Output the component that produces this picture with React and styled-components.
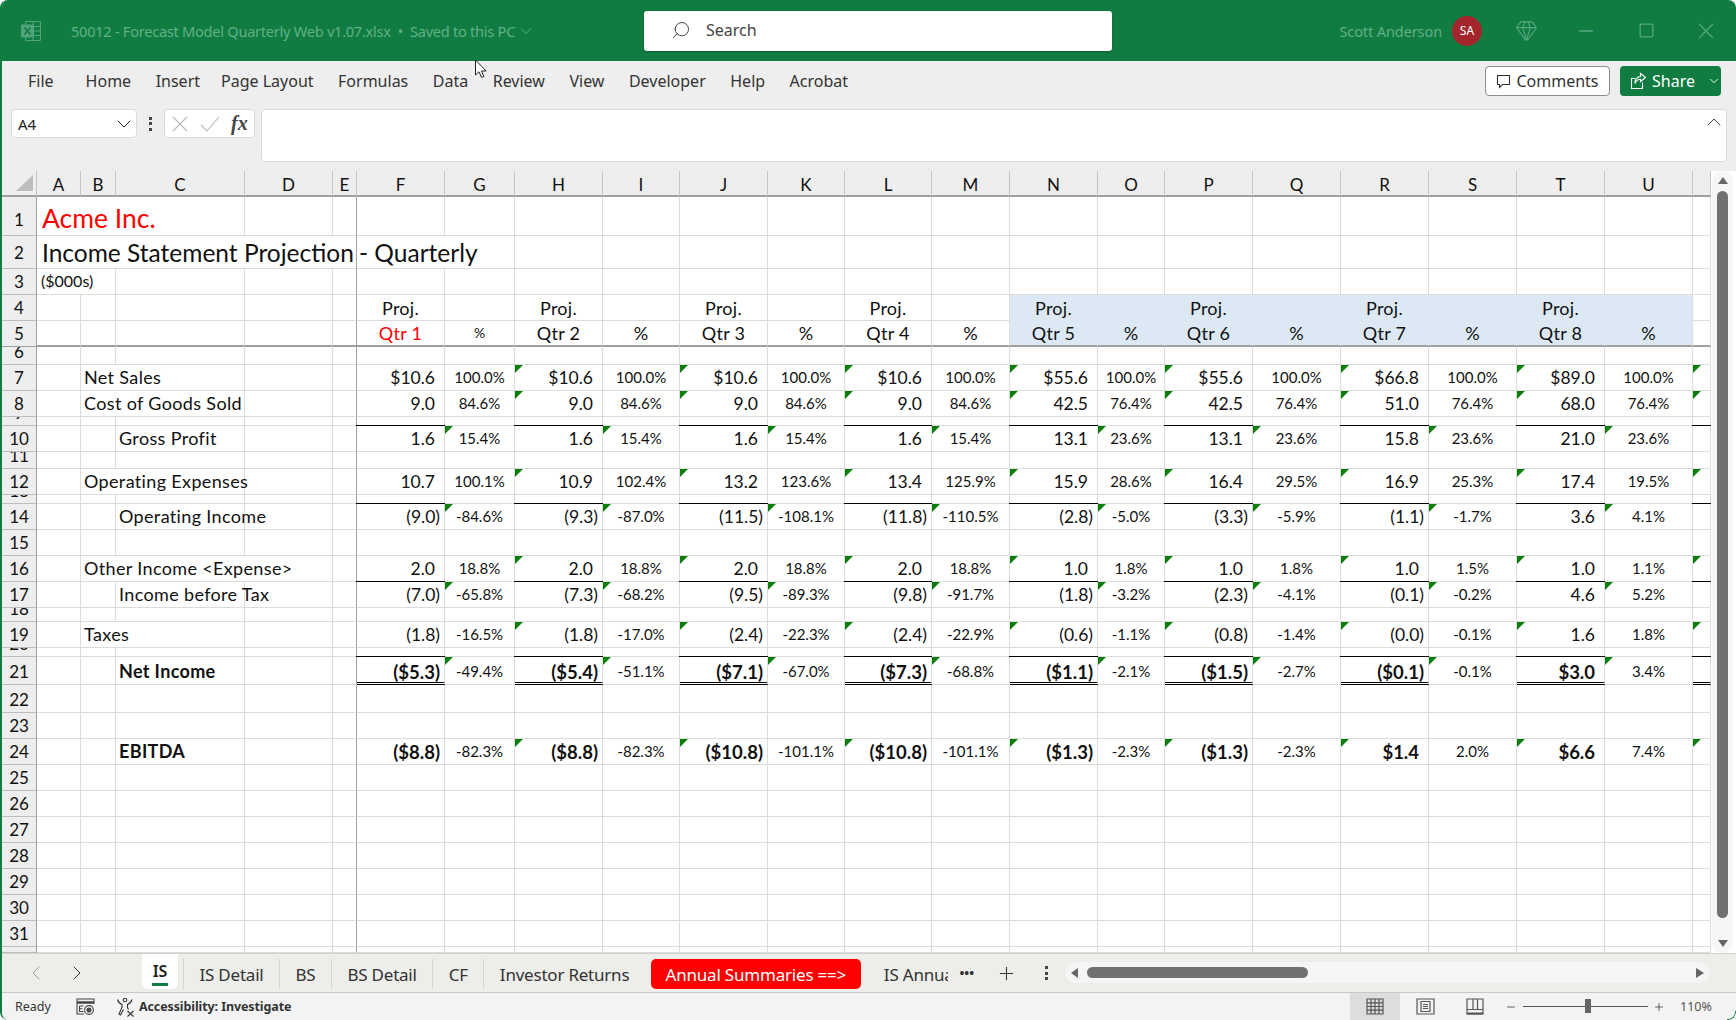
import React from 'react';
import styled, { createGlobalStyle } from 'styled-components';
import { Search, ChevronDown, ChevronUp, ChevronLeft, ChevronRight, Gem, Minus, Square, X, Plus } from 'lucide-react';

const GlobalStyle = createGlobalStyle`
  html, body { margin: 0; padding: 0; background: #fff; overflow: hidden; }
  * { box-sizing: border-box; }
`;

const uiFont = `'Noto Sans', 'Open Sans', sans-serif`;
const cellFont = `Lato, Carlito, sans-serif`;
const green = '#107c41';
const gridLine = '#dcdcdc';
const freezeLine = '#a0a0a0';
const titleIcon = '#55a981';

const colEdges = [2, 37, 81, 116, 245, 333, 357, 445, 515, 603, 680, 768, 845, 932, 1010, 1098, 1165, 1253, 1341, 1429, 1517, 1605, 1693, 1711];
const rowEdges = [171, 197, 236, 269, 295, 321, 347, 365, 391, 417, 426, 452, 469, 495, 504, 530, 556, 582, 608, 622, 648, 657, 685, 713, 739, 765, 791, 817, 843, 869, 895, 921, 947, 953];
const diffs = (edges) => edges.slice(1).map((e, i) => `${e - edges[i]}px`).join(' ');

const colNames = ['A', 'B', 'C', 'D', 'E', 'F', 'G', 'H', 'I', 'J', 'K', 'L', 'M', 'N', 'O', 'P', 'Q', 'R', 'S', 'T', 'U', ''];

const labels = {
  7: { text: 'Net Sales', col: 1, span: 2 },
  8: { text: 'Cost of Goods Sold', col: 1, span: 2 },
  10: { text: 'Gross Profit', col: 2, span: 1 },
  12: { text: 'Operating Expenses', col: 1, span: 2 },
  14: { text: 'Operating Income', col: 2, span: 1 },
  16: { text: 'Other Income <Expense>', col: 1, span: 3 },
  17: { text: 'Income before Tax', col: 2, span: 1 },
  19: { text: 'Taxes', col: 1, span: 2 },
  21: { text: 'Net Income', col: 2, span: 1, bold: true },
  24: { text: 'EBITDA', col: 2, span: 1, bold: true },
};

const figures = {
  7: [['$10.6', '100.0%'], ['$10.6', '100.0%'], ['$10.6', '100.0%'], ['$10.6', '100.0%'], ['$55.6', '100.0%'], ['$55.6', '100.0%'], ['$66.8', '100.0%'], ['$89.0', '100.0%']],
  8: [['9.0', '84.6%'], ['9.0', '84.6%'], ['9.0', '84.6%'], ['9.0', '84.6%'], ['42.5', '76.4%'], ['42.5', '76.4%'], ['51.0', '76.4%'], ['68.0', '76.4%']],
  10: [['1.6', '15.4%'], ['1.6', '15.4%'], ['1.6', '15.4%'], ['1.6', '15.4%'], ['13.1', '23.6%'], ['13.1', '23.6%'], ['15.8', '23.6%'], ['21.0', '23.6%']],
  12: [['10.7', '100.1%'], ['10.9', '102.4%'], ['13.2', '123.6%'], ['13.4', '125.9%'], ['15.9', '28.6%'], ['16.4', '29.5%'], ['16.9', '25.3%'], ['17.4', '19.5%']],
  14: [['(9.0)', '-84.6%'], ['(9.3)', '-87.0%'], ['(11.5)', '-108.1%'], ['(11.8)', '-110.5%'], ['(2.8)', '-5.0%'], ['(3.3)', '-5.9%'], ['(1.1)', '-1.7%'], ['3.6', '4.1%']],
  16: [['2.0', '18.8%'], ['2.0', '18.8%'], ['2.0', '18.8%'], ['2.0', '18.8%'], ['1.0', '1.8%'], ['1.0', '1.8%'], ['1.0', '1.5%'], ['1.0', '1.1%']],
  17: [['(7.0)', '-65.8%'], ['(7.3)', '-68.2%'], ['(9.5)', '-89.3%'], ['(9.8)', '-91.7%'], ['(1.8)', '-3.2%'], ['(2.3)', '-4.1%'], ['(0.1)', '-0.2%'], ['4.6', '5.2%']],
  19: [['(1.8)', '-16.5%'], ['(1.8)', '-17.0%'], ['(2.4)', '-22.3%'], ['(2.4)', '-22.9%'], ['(0.6)', '-1.1%'], ['(0.8)', '-1.4%'], ['(0.0)', '-0.1%'], ['1.6', '1.8%']],
  21: [['($5.3)', '-49.4%'], ['($5.4)', '-51.1%'], ['($7.1)', '-67.0%'], ['($7.3)', '-68.8%'], ['($1.1)', '-2.1%'], ['($1.5)', '-2.7%'], ['($0.1)', '-0.1%'], ['$3.0', '3.4%']],
  24: [['($8.8)', '-82.3%'], ['($8.8)', '-82.3%'], ['($10.8)', '-101.1%'], ['($10.8)', '-101.1%'], ['($1.3)', '-2.3%'], ['($1.3)', '-2.3%'], ['$1.4', '2.0%'], ['$6.6', '7.4%']],
};

// rows whose number sits under a black rule and whose marker sits on the % column
const ruledRows = [10, 14, 17, 21];
const boldRows = [21, 24];

const Window = styled.div`
  width: 1736px;
  height: 1020px;
  display: flex;
  flex-direction: column;
  background: #eeeeee;
  border-left: 2px solid ${green};
  border-radius: 8px;
  overflow: hidden;
  font-family: ${uiFont};
  position: relative;
`;

const TitleBar = styled.header`
  height: 61px;
  margin-left: -2px;
  flex: none;
  background: ${green};
  display: grid;
  grid-template-columns: 644px 468px 1fr;
  align-items: center;
`;

const TitleLeft = styled.div`
  display: flex;
  align-items: center;
  padding-left: 21px;
  color: #62b088;
  font-size: 14.6px;
  white-space: nowrap;
`;

const FileName = styled.span`
  margin-left: 30px;
  margin-right: 1px;
  letter-spacing: -0.27px;
`;

const SearchBox = styled.div`
  height: 40px;
  background: #fff;
  border-radius: 3px;
  box-shadow: 0 1px 2px rgba(0, 0, 0, 0.3);
  display: flex;
  align-items: center;
  padding: 0 0 2px 27px;
  gap: 15px;
  color: #444;
  font-size: 16px;
`;

const TitleRight = styled.div`
  display: flex;
  align-items: center;
  justify-content: flex-end;
  color: #62b088;
  font-size: 14.5px;
  letter-spacing: -0.1px;
`;

const Avatar = styled.span`
  width: 30px;
  height: 30px;
  margin-left: 10px;
  margin-right: 33px;
  border-radius: 50%;
  background: #a4262c;
  color: #fff;
  font-size: 12px;
  letter-spacing: 0;
  display: flex;
  align-items: center;
  justify-content: center;
`;

const WindowButton = styled.span`
  width: 60px;
  display: flex;
  justify-content: center;
  margin-left: ${({ $left }) => $left || 0}px;
`;

const RibbonTabs = styled.nav`
  height: 40px;
  flex: none;
  display: flex;
  align-items: center;
  padding-left: 26px;
  font-size: 16px;
  color: #333;
`;

const RibbonTab = styled.span`
  margin-right: ${({ $gap }) => $gap || 24.5}px;
`;

const RibbonActions = styled.div`
  margin-left: auto;
  padding-right: 15px;
  display: flex;
  gap: 10px;
`;

const CommentsButton = styled.button`
  width: 125px;
  height: 30px;
  padding: 0;
  background: #fff;
  border: 1px solid #8c8c8c;
  border-radius: 4px;
  display: flex;
  align-items: center;
  justify-content: center;
  gap: 5px;
  font: inherit;
  color: #333;
`;

const ShareButton = styled.button`
  width: 101px;
  height: 30px;
  padding: 0 0 0 10px;
  background: ${green};
  border: none;
  border-radius: 4px;
  display: flex;
  align-items: center;
  gap: 5px;
  font: inherit;
  color: #fff;
`;

const FormulaRow = styled.div`
  height: 62px;
  flex: none;
  margin-top: 8px;
  padding: 0 9px 9px 9px;
  display: flex;
  align-items: flex-start;
`;

const NameBox = styled.div`
  width: 126px;
  height: 29px;
  background: #fff;
  border: 1px solid #dadada;
  border-radius: 4px;
  display: flex;
  align-items: center;
  justify-content: space-between;
  padding: 0 0 0 6px;
  font-size: 15px;
  color: #222;
`;

const Dots = styled.span`
  width: 27px;
  height: 29px;
  display: flex;
  flex-direction: column;
  align-items: center;
  justify-content: center;
  gap: 2.5px;
`;

const Dot = styled.i`
  width: 3px;
  height: 3px;
  background: #444;
`;

const FxBox = styled.div`
  width: 91px;
  height: 29px;
  background: #fff;
  border: 1px solid #dadada;
  border-radius: 4px;
  display: flex;
  align-items: center;
  padding-left: 7px;
  gap: 12px;
`;

const FxMark = styled.span`
  margin-left: -1px;
  font-family: 'Liberation Serif', serif;
  font-style: italic;
  font-weight: 700;
  font-size: 20px;
  color: #444;
`;

const FormulaInput = styled.div`
  flex: 1;
  height: 53px;
  margin-left: 6px;
  background: #fff;
  border: 1px solid #dadada;
  border-radius: 4px;
  display: flex;
  justify-content: flex-end;
  padding: 0;
  color: #444;
`;

const SheetArea = styled.div`
  height: 782px;
  flex: none;
  display: flex;
  background: #fff;
`;

const Sheet = styled.div`
  display: grid;
  grid-template-columns: ${diffs(colEdges)};
  grid-template-rows: ${diffs(rowEdges)};
  font-family: ${cellFont};
  color: #111;
`;

const Corner = styled.div`
  background: #eeeeee;
  border-bottom: 2px solid ${freezeLine};
  border-right: 1px solid #c4c4c4;
  padding: 4px 3px 4px 14px;
`;

const CornerMark = styled.div`
  width: 100%;
  height: 100%;
  background: #bdbdbd;
  clip-path: polygon(100% 0, 100% 100%, 0 100%);
`;

const ColHeader = styled.div`
  background: #eeeeee;
  border-bottom: 2px solid ${freezeLine};
  border-right: 1px solid #c4c4c4;
  display: flex;
  align-items: center;
  justify-content: center;
  padding-top: 2px;
  font-size: 17px;
  overflow: hidden;
`;

const RowHeader = styled.div`
  background: #eeeeee;
  border-right: 1px solid ${freezeLine};
  border-bottom: 1px solid ${({ $strong }) => ($strong ? freezeLine : '#bdbdbd')};
  display: flex;
  align-items: flex-end;
  justify-content: center;
  padding-bottom: ${({ $bottom }) => $bottom}px;
  overflow: hidden;
  font-size: 17px;
  line-height: 16px;
`;

const Cell = styled.div`
  position: relative;
  display: flex;
  align-items: flex-end;
  justify-content: ${({ $align }) => $align};
  grid-column: span ${({ $span }) => $span || 1};
  padding: 0 ${({ $pad }) => $pad}px ${({ $bottom }) => $bottom}px ${({ $indent }) => $indent}px;
  white-space: nowrap;
  background: ${({ $fill }) => $fill || 'transparent'};
  border-right: 1px solid ${({ $noRight, $freeze }) => ($freeze ? freezeLine : $noRight ? 'transparent' : gridLine)};
  border-bottom: ${({ $double, $strong, $noBottom }) =>
    $double ? '3px double #000' : $strong ? `2px solid ${freezeLine}` : $noBottom ? 'none' : `1px solid ${gridLine}`};
  color: ${({ $color }) => $color || 'inherit'};
  font-size: ${({ $size }) => $size}px;
  font-weight: ${({ $bold }) => ($bold ? 700 : 400)};
  letter-spacing: ${({ $track }) => $track || 0}px;
  line-height: 18px;
  ${({ $rule }) => $rule && `
    &::before {
      content: '';
      position: absolute;
      left: -1px;
      right: -1px;
      top: -1px;
      height: 1px;
      background: #000;
    }
  `}
  ${({ $flag }) => $flag && `
    &::after {
      content: '';
      position: absolute;
      left: 0;
      top: 0;
      width: 8px;
      height: 8px;
      background: #0a7d0a;
      clip-path: polygon(0 0, 100% 0, 0 100%);
    }
  `}
`;

const VScroll = styled.div`
  flex: 1;
  margin: 0 3px 0 1px;
  align-self: stretch;
  background: #f6f6f6;
  border-radius: 10px;
  display: flex;
  flex-direction: column;
  align-items: center;
  padding: 6px 0;
`;

const VThumb = styled.div`
  width: 11px;
  flex: 1;
  margin: 7px 0 22px;
  background: #717171;
  border-radius: 6px;
`;

const TabBar = styled.div`
  height: 40px;
  flex: none;
  background: #edede9;
  border-top: 1px solid #d0d0d0;
  border-bottom: 1px solid #c8c8c8;
  display: flex;
  align-items: flex-start;
  font-size: 17px;
  color: #333;
`;

const TabArrows = styled.div`
  width: 140px;
  height: 100%;
  display: flex;
  align-items: center;
  padding-left: 22px;
  gap: 17px;
`;

const ActiveTab = styled.div`
  width: 36px;
  height: 35px;
  background: #fff;
  border-radius: 0 0 6px 6px;
  display: flex;
  flex-direction: column;
  align-items: center;
  justify-content: flex-end;
  padding-bottom: 3px;
  font-weight: 600;
  font-size: 16px;
  line-height: 24px;
  color: #222;
`;

const ActiveBar = styled.span`
  width: 16px;
  height: 3px;
  background: ${green};
`;

const SheetTab = styled.div`
  height: 30px;
  margin-top: 5px;
  margin-left: ${({ $left }) => $left || 0}px;
  padding: 0 15.5px;
  display: flex;
  align-items: center;
  border-left: 1px solid #d4d4d4;
  letter-spacing: -0.22px;
  white-space: nowrap;
`;

const RedTab = styled.div`
  width: 210px;
  height: 30px;
  margin: 5px 0 0 6px;
  background: #ff0000;
  border-radius: 5px;
  color: #fff;
  display: flex;
  align-items: center;
  justify-content: center;
  letter-spacing: -0.2px;
  white-space: nowrap;
`;

const ClippedTab = styled.div`
  width: 64px;
  height: 30px;
  margin: 5px 0 0 23px;
  display: flex;
  align-items: center;
  overflow: hidden;
  white-space: nowrap;
  letter-spacing: -0.2px;
`;

const TabTools = styled.div`
  height: 100%;
  display: flex;
  align-items: center;
  color: #333;
  font-size: 13px;
  font-weight: 700;
`;

const TabTool = styled.span`
  width: ${({ $w }) => $w}px;
  display: flex;
  justify-content: center;
`;

const HScroll = styled.div`
  width: 645px;
  height: 21px;
  margin: 8px 0 0 -1px;
  background: #f5f5f5;
  border-radius: 10px;
  display: flex;
  align-items: center;
  padding: 0 6px;
`;

const HThumb = styled.div`
  width: 221px;
  height: 11px;
  margin-left: 9px;
  background: #717171;
  border-radius: 6px;
`;

const Arrow = styled.span`
  width: 0;
  height: 0;
  border-style: solid;
  border-color: transparent;
  ${({ $dir }) => ($dir === 'left'
    ? `border-width: 5px 7px 5px 0; border-right-color: #666;`
    : `border-width: 5px 0 5px 8px; border-left-color: #666; margin-left: auto;`)}
`;

const VArrow = styled.span`
  width: 0;
  height: 0;
  border-style: solid;
  border-color: transparent;
  ${({ $dir }) => ($dir === 'up'
    ? `border-width: 0 5px 7px 5px; border-bottom-color: #666;`
    : `border-width: 7px 5px 0 5px; border-top-color: #666;`)}
`;

const StatusBar = styled.footer`
  flex: 1;
  background: #f3f3f3;
  display: flex;
  align-items: center;
  padding-left: 13px;
  font-size: 12.5px;
  color: #333;
  position: relative;

  &::after {
    content: '';
    position: absolute;
    right: 0;
    bottom: 0;
    width: 8px;
    height: 8px;
    border-right: 1px solid ${green};
    border-bottom: 1px solid ${green};
    border-bottom-right-radius: 8px;
  }
`;

const StatusIcon = styled.span`
  display: flex;
  margin-left: ${({ $left }) => $left}px;
  margin-right: ${({ $right }) => $right || 0}px;
`;

const Strong = styled.span`
  font-weight: 700;
  margin-left: 3px;
  letter-spacing: -0.1px;
`;

const StatusRight = styled.div`
  margin-left: auto;
  height: 100%;
  display: flex;
  align-items: center;
`;

const ViewButton = styled.span`
  width: 50px;
  height: 100%;
  display: flex;
  align-items: center;
  justify-content: center;
  background: ${({ $active }) => ($active ? '#dddddd' : 'transparent')};
`;

const ZoomControl = styled.div`
  display: flex;
  align-items: center;
  width: 236px;
  padding-left: 5px;
`;

const ZoomTrack = styled.div`
  position: relative;
  width: 125px;
  height: 1px;
  margin: 0 5px 0 6px;
  background: #555;
`;

const ZoomThumb = styled.span`
  position: absolute;
  left: 62px;
  top: -7px;
  width: 6px;
  height: 14px;
  background: #666;
`;

const ZoomLabel = styled.span`
  margin-left: 15px;
  color: #555;
`;

const Pointer = styled.svg`
  position: absolute;
  left: 472px;
  top: 59px;
`;

const ExcelLogo = () => (
  <svg width="20" height="20" viewBox="0 0 20 20" fill="none" stroke="#4fa47b" strokeWidth="1.1">
    <rect x="4.5" y="0.5" width="15" height="19" rx="1" />
    <path d="M12 0.5v19M4.5 5.5h15M4.5 10h15M4.5 14.5h15" />
    <rect x="0" y="3.5" width="13" height="13" fill="#4fa47b" stroke="none" />
    <path d="M3.5 6.5l6 7M9.5 6.5l-6 7" stroke="#107c41" strokeWidth="1.6" />
  </svg>
);

const CommentIcon = () => (
  <svg width="15" height="15" viewBox="0 0 15 15" fill="none" stroke="#333" strokeWidth="1.1">
    <path d="M1.5 1.5h12v9H6.5l-3 3v-3h-2z" />
  </svg>
);

const ShareIcon = () => (
  <svg width="17" height="18" viewBox="0 0 17 18" fill="none" stroke="#fff" strokeWidth="1.1">
    <path d="M5 6.5H1.5v10h11v-6" />
    <path d="M10.5 1.5l5 4-5 4V7.2C8 7.2 6 8.6 5 11.5 4.8 7.5 7 5 10.5 4.5z" />
  </svg>
);

const CancelMark = () => (
  <svg width="16" height="16" viewBox="0 0 16 16" stroke="#b8b8b8" strokeWidth="1.1">
    <path d="M1 1l14 14M15 1L1 15" />
  </svg>
);

const ConfirmMark = () => (
  <svg width="20" height="16" viewBox="0 0 20 16" fill="none" stroke="#b8b8b8" strokeWidth="1.1">
    <path d="M1 9l6 6L19 1" />
  </svg>
);

const MacroIcon = () => (
  <svg width="19" height="18" viewBox="0 0 19 18" fill="none" stroke="#444" strokeWidth="1.1">
    <path d="M1 4.5V1h17v5" />
    <path d="M1 4.5h17" strokeWidth="2.4" />
    <path d="M1 4.5V16h7" />
    <path d="M3.5 8h4M3.5 8v5.5h4M3.5 10.7h3" />
    <circle cx="13" cy="12" r="4.4" />
    <circle cx="13" cy="12" r="2" fill="#444" />
  </svg>
);

const AccessIcon = () => (
  <svg width="20" height="20" viewBox="0 0 20 20" fill="none" stroke="#333" strokeWidth="1.1">
    <circle cx="9" cy="3" r="1.8" />
    <path d="M1.5 2.5c1 3 3 4.5 4.5 5v3l-3 6.5 1.5 1 3-5.5" />
    <path d="M16 2.5c-1 3-3 4.5-4.5 5v3l1 2" />
    <path d="M11.5 14l6 5.5M17.5 14l-6 5.5" />
  </svg>
);

const NormalViewIcon = () => (
  <svg width="18" height="17" viewBox="0 0 18 17" fill="none" stroke="#555" strokeWidth="1.2">
    <path d="M1 1h16v15H1zM5 1v15M9 1v15M13 1v15M1 4.8h16M1 8.5h16M1 12.2h16" />
  </svg>
);

const PageViewIcon = () => (
  <svg width="19" height="17" viewBox="0 0 19 17" fill="none" stroke="#555" strokeWidth="1.2">
    <path d="M1 1h17v15H1zM5 3.5h9v10H5zM7 6.5h5M7 8.5h5M7 10.5h5" />
  </svg>
);

const BreakViewIcon = () => (
  <svg width="18" height="17" viewBox="0 0 18 17" fill="none" stroke="#555" strokeWidth="1.2">
    <path d="M1 1h16v15H1zM1 11.5h16M7 1v10.5M11.5 1v10.5" />
    <path d="M1 15.5h16" strokeWidth="2" />
  </svg>
);

const rowNumbers = Array.from({ length: 32 }, (_, i) => i + 1);

const cellsForRow = (row, frozenBottom) => {
  const out = [];
  const label = labels[row];
  const rowData = figures[row];
  const isRuled = ruledRows.includes(row);
  let skip = 0;

  colNames.forEach((name, c) => {
    if (skip > 0) {
      skip -= 1;
      return;
    }
    const key = `${row}-${c}`;
    const base = {
      $align: 'flex-start',
      $pad: 0,
      $indent: 3,
      $bottom: 3,
      $size: 16,
      $strong: frozenBottom,
      $freeze: c === 4,
    };

    // titles in the first rows run over the empty cells beside them
    if (row === 1 && c === 0) {
      out.push(<Cell key={key} {...base} $span={3} $size={26.5} $bottom={8} $color="#ff0000" $indent={5}>Acme Inc.</Cell>);
      skip = 2;
      return;
    }
    if (row === 2 && c === 0) {
      out.push(<Cell key={key} {...base} $span={5} $size={24.5} $bottom={6} $indent={5} $freeze>Income Statement Projection</Cell>);
      skip = 4;
      return;
    }
    if (row === 2 && c === 5) {
      out.push(<Cell key={key} {...base} $span={2} $size={24.5} $bottom={6} $indent={2}>- Quarterly</Cell>);
      skip = 1;
      return;
    }
    if (row === 3 && c === 0) {
      out.push(<Cell key={key} {...base} $span={2} $size={16} $bottom={4} $indent={4}>($000s)</Cell>);
      skip = 1;
      return;
    }
    if (label && c === label.col) {
      out.push(<Cell key={key} {...base} $span={label.span} $size={18} $bottom={4} $track={0.35} $bold={label.bold}>{label.text}</Cell>);
      skip = label.span - 1;
      return;
    }

    const inData = c >= 5 && c <= 20;
    const valueCol = c >= 5 && (c - 5) % 2 === 0; // F, H, J ... and the cut-off column after U
    const percentCol = c >= 6 && (c - 6) % 2 === 0;
    const fill = (row === 4 || row === 5) && c >= 13 && c <= 20 ? '#dce9f5' : undefined;

    if (row === 4 || row === 5) {
      const q = (c - 5) / 2 + 1;
      let text = '';
      if (valueCol && inData) text = row === 4 ? 'Proj.' : `Qtr ${q}`;
      if (percentCol && inData && row === 5) text = '%';
      const small = text === '%' && c === 6;
      const bare = !!fill && row === 4;
      out.push(
        <Cell
          key={key}
          {...base}
          $fill={fill}
          $noBottom={bare}
          $noRight={!!fill && c !== 20}
          $align="center"
          $indent={0}
          $bottom={bare ? 4 : 3}
          $size={small ? 14 : 18}
          $track={small ? 0 : 0.3}
          $color={row === 5 && c === 5 ? '#ff0000' : undefined}
        >
          {text}
        </Cell>,
      );
      return;
    }

    if (rowData && c >= 5) {
      const ruleHere = isRuled && valueCol;
      const flag = isRuled ? percentCol : valueCol && c > 5;
      const bold = boldRows.includes(row);
      const double = row === 21 && valueCol;
      const props = { ...base, $rule: ruleHere, $flag: flag, $double: double };
      if (inData) {
        const pair = rowData[Math.floor((c - 5) / 2)];
        if (valueCol) {
          const val = pair[0];
          out.push(
            <Cell
              key={key}
              {...props}
              $align="flex-end"
              $pad={val.endsWith(')') ? 4 : 9}
              $bottom={double ? 1 : 3}
              $size={bold ? 18.5 : 17.5}
              $bold={bold}
            >
              {val}
            </Cell>,
          );
        } else {
          out.push(
            <Cell key={key} {...props} $align="center" $indent={0} $bottom={4} $size={15}>
              {pair[1]}
            </Cell>,
          );
        }
      } else {
        out.push(<Cell key={key} {...props} />);
      }
      return;
    }

    out.push(<Cell key={key} {...base} />);
  });
  return out;
};

const App = () => (
  <Window>
    <GlobalStyle />
    <TitleBar>
      <TitleLeft>
        <ExcelLogo />
        <FileName>50012 - Forecast Model Quarterly Web v1.07.xlsx&nbsp;&nbsp;•&nbsp;&nbsp;Saved to this PC</FileName>
        <ChevronDown size={20} strokeWidth={1.1} />
      </TitleLeft>
      <SearchBox>
        <Search size={20} strokeWidth={1.2} style={{ transform: 'scaleX(-1)' }} />
        Search
      </SearchBox>
      <TitleRight>
        Scott Anderson
        <Avatar>SA</Avatar>
        <Gem size={23} strokeWidth={1.2} color={titleIcon} />
        <WindowButton $left={18}><Minus size={22} strokeWidth={1.4} color={titleIcon} /></WindowButton>
        <WindowButton><Square size={17} strokeWidth={1.8} color={titleIcon} /></WindowButton>
        <WindowButton><X size={26} strokeWidth={1.2} color={titleIcon} /></WindowButton>
      </TitleRight>
    </TitleBar>

    <RibbonTabs>
      <RibbonTab $gap={32}>File</RibbonTab>
      <RibbonTab>Home</RibbonTab>
      <RibbonTab $gap={21}>Insert</RibbonTab>
      {['Page Layout', 'Formulas', 'Data', 'Review', 'View', 'Developer', 'Help', 'Acrobat'].map((t) => (
        <RibbonTab key={t}>{t}</RibbonTab>
      ))}
      <RibbonActions>
        <CommentsButton><CommentIcon />Comments</CommentsButton>
        <ShareButton><ShareIcon />Share<ChevronDown size={14} strokeWidth={1.6} style={{ marginLeft: 7 }} /></ShareButton>
      </RibbonActions>
    </RibbonTabs>

    <FormulaRow>
      <NameBox>A4<ChevronDown size={24} strokeWidth={1} /></NameBox>
      <Dots><Dot /><Dot /><Dot /></Dots>
      <FxBox>
        <CancelMark />
        <ConfirmMark />
        <FxMark>fx</FxMark>
      </FxBox>
      <FormulaInput><ChevronUp size={24} strokeWidth={1} /></FormulaInput>
    </FormulaRow>

    <SheetArea>
      <Sheet>
        <Corner><CornerMark /></Corner>
        {colNames.map((name, i) => <ColHeader key={i}>{name}</ColHeader>)}
        {rowNumbers.map((row) => {
          const frozenBottom = row === 5;
          return (
            <React.Fragment key={row}>
              <RowHeader $strong={frozenBottom} $bottom={row <= 2 ? 7 : 4}>{row <= 31 ? row : ''}</RowHeader>
              {cellsForRow(row, frozenBottom)}
            </React.Fragment>
          );
        })}
      </Sheet>
      <VScroll>
        <VArrow $dir="up" />
        <VThumb />
        <VArrow $dir="down" />
      </VScroll>
    </SheetArea>

    <TabBar>
      <TabArrows>
        <ChevronLeft size={24} strokeWidth={1} color="#999" />
        <ChevronRight size={24} strokeWidth={1} />
      </TabArrows>
      <ActiveTab>IS<ActiveBar /></ActiveTab>
      <SheetTab $left={5}>IS Detail</SheetTab>
      <SheetTab>BS</SheetTab>
      <SheetTab>BS Detail</SheetTab>
      <SheetTab>CF</SheetTab>
      <SheetTab>Investor Returns</SheetTab>
      <RedTab>Annual Summaries ==&gt;</RedTab>
      <ClippedTab>IS Annual</ClippedTab>
      <TabTools>
        <TabTool $w={38}>•••</TabTool>
        <TabTool $w={42}><Plus size={21} strokeWidth={1.2} /></TabTool>
        <TabTool $w={38}><Dots><Dot /><Dot /><Dot /></Dots></TabTool>
      </TabTools>
      <HScroll>
        <Arrow $dir="left" />
        <HThumb />
        <Arrow $dir="right" />
      </HScroll>
    </TabBar>

    <StatusBar>
      Ready
      <StatusIcon $left={25} $right={21}><MacroIcon /></StatusIcon>
      <AccessIcon />
      <Strong>Accessibility: Investigate</Strong>
      <StatusRight>
        <ViewButton $active><NormalViewIcon /></ViewButton>
        <ViewButton><PageViewIcon /></ViewButton>
        <ViewButton><BreakViewIcon /></ViewButton>
        <ZoomControl>
          <Minus size={12} strokeWidth={1.5} />
          <ZoomTrack><ZoomThumb /></ZoomTrack>
          <Plus size={12} strokeWidth={1.5} />
          <ZoomLabel>110%</ZoomLabel>
        </ZoomControl>
      </StatusRight>
    </StatusBar>

    <Pointer width="15" height="20" viewBox="0 0 15 20">
      <path d="M1.5 1v15l3.5-3.2 2.5 5.6 2.4-1-2.5-5.4h4.8z" fill="#fff" stroke="#222" strokeWidth="1" />
    </Pointer>
  </Window>
);

export default App;
